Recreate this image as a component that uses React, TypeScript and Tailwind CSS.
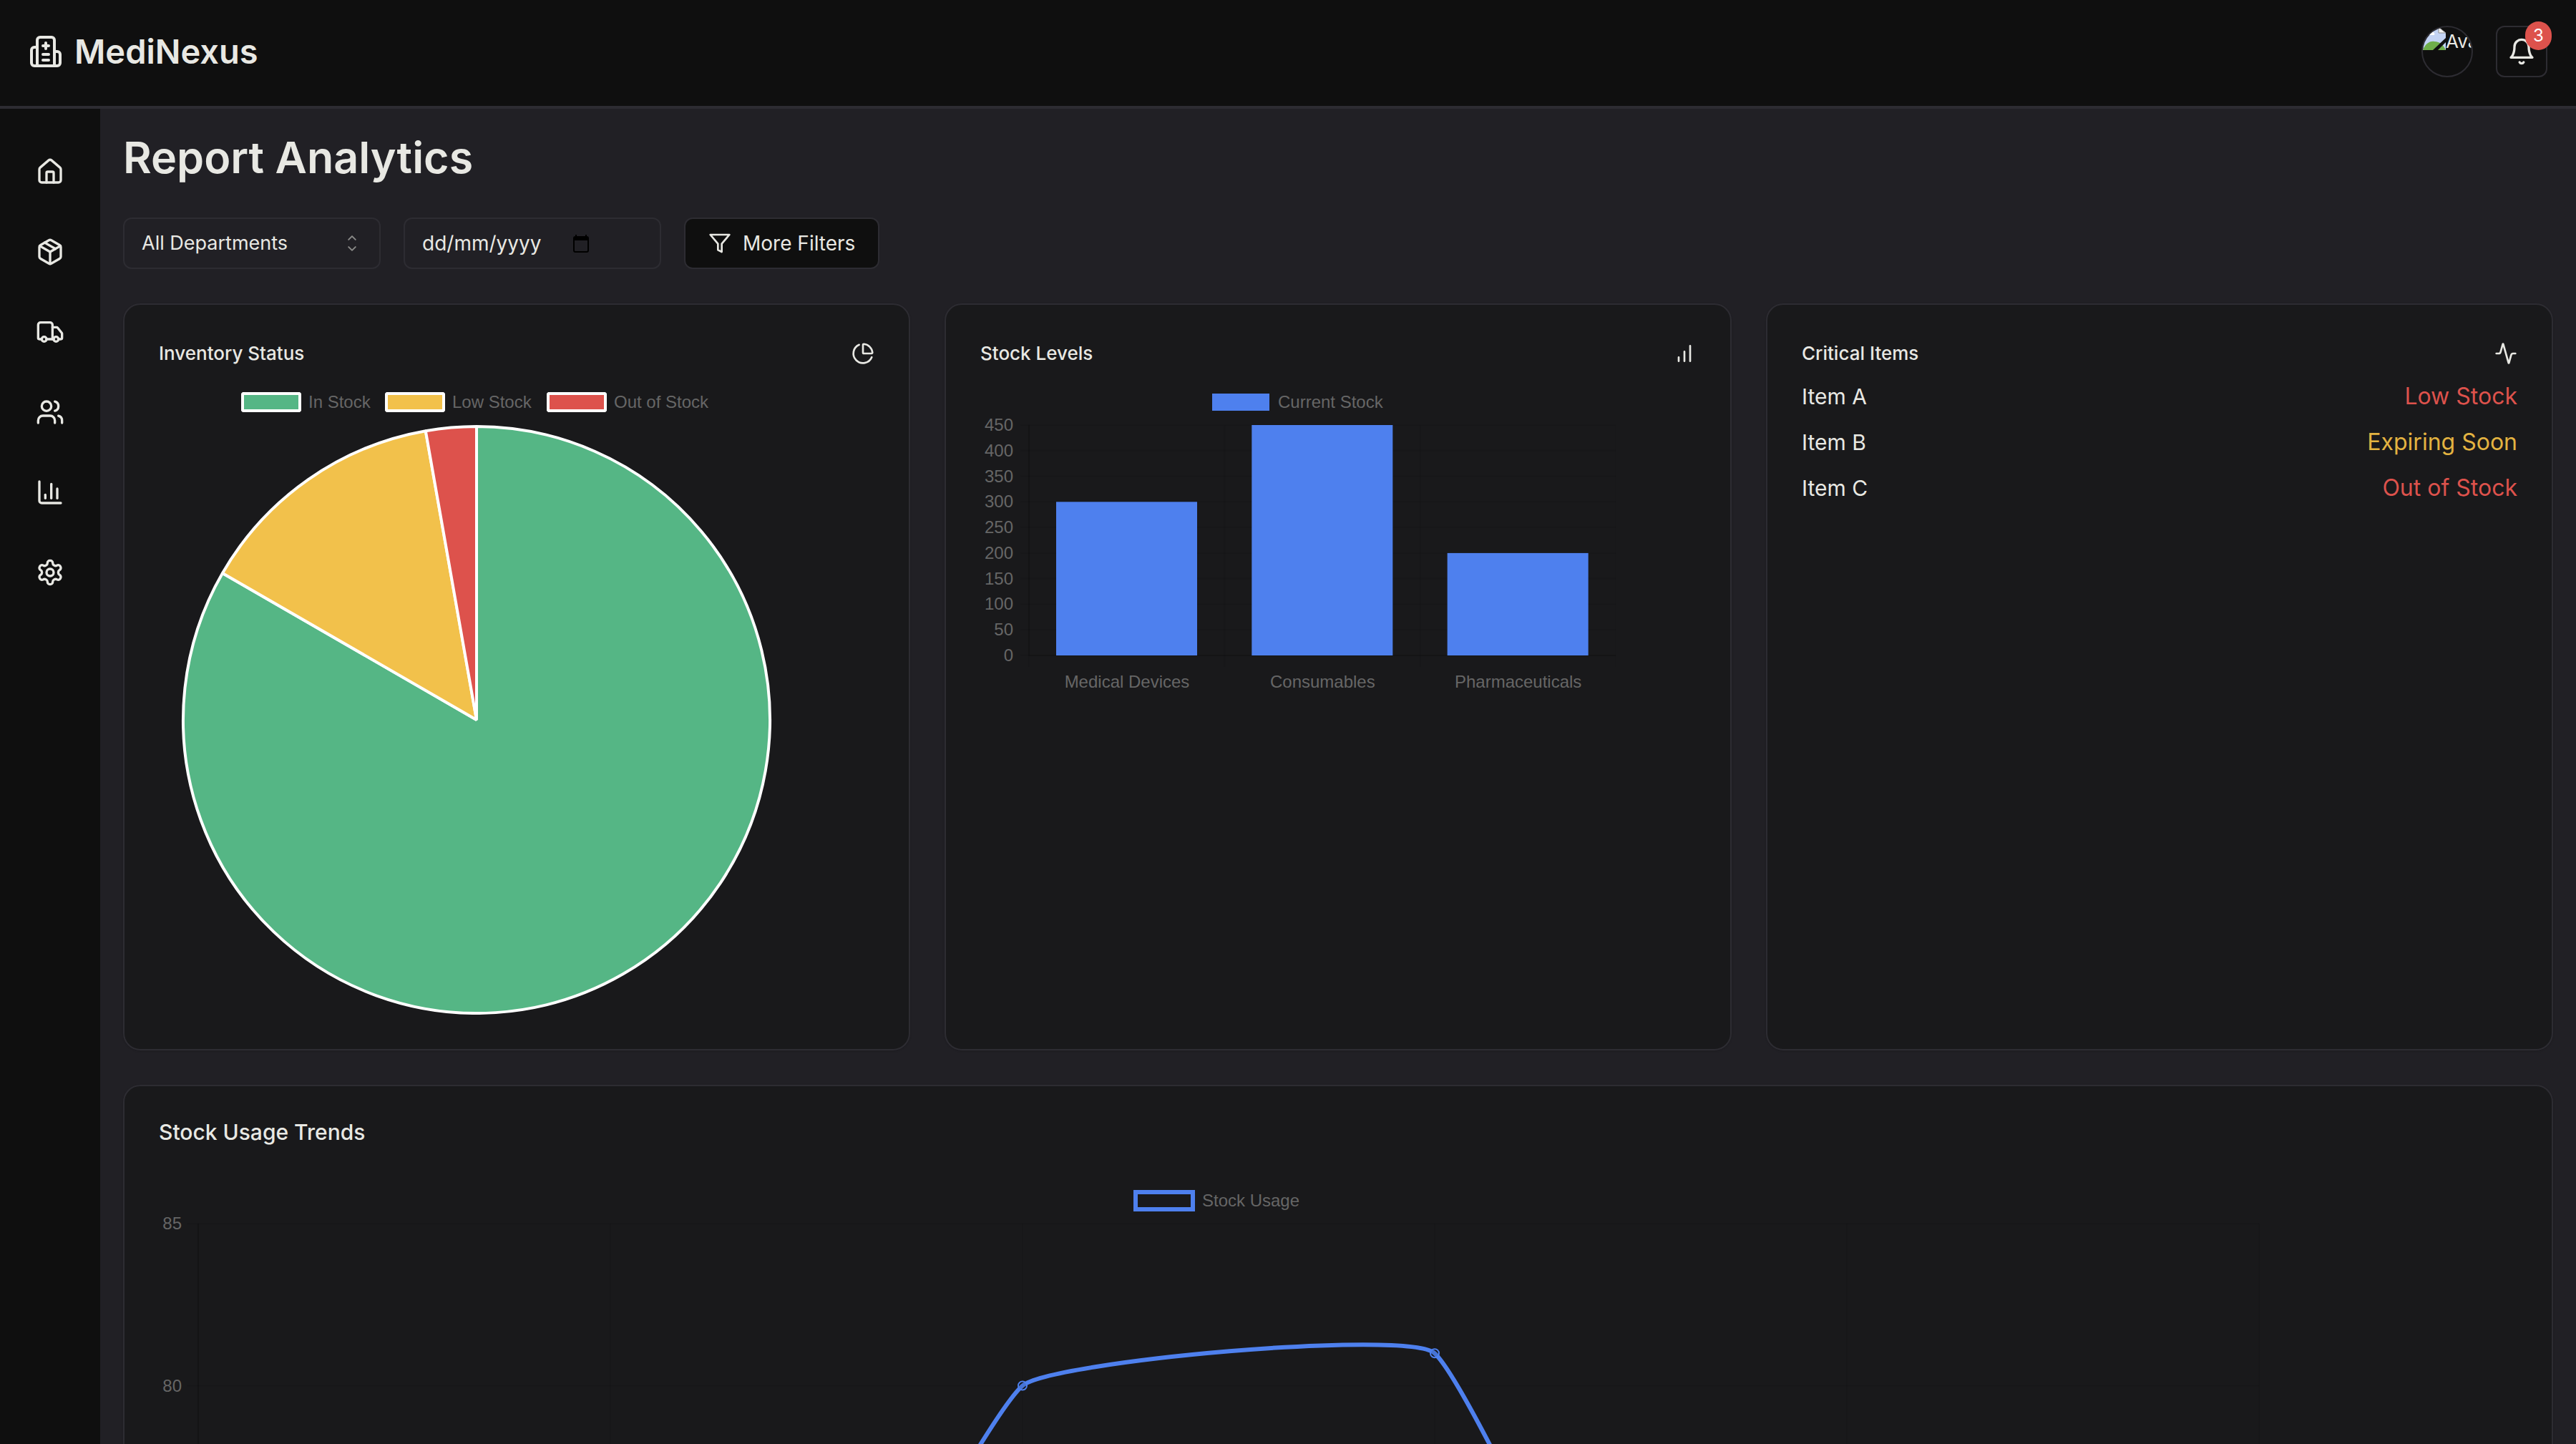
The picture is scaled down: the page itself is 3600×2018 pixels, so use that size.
import React from "react";
import { Activity, ChartColumn, ChartPie, House, Package, Truck, Users } from "lucide-react";

function StrokeIcon({ className, children }: { className: string; children: React.ReactNode }) {
  return (
    <svg viewBox="0 0 24 24" className={className} fill="none" stroke="currentColor" strokeWidth="2" strokeLinecap="round" strokeLinejoin="round" aria-hidden="true">
      {children}
    </svg>
  );
}

function HospitalIcon() {
  return (
    <StrokeIcon className="size-12">
      <path d="M12 6v4M14 14h-4M14 18h-4M14 8h-4" />
      <path d="M18 12h2a2 2 0 0 1 2 2v6a2 2 0 0 1-2 2H4a2 2 0 0 1-2-2v-9a2 2 0 0 1 2-2h2" />
      <path d="M18 22V4a2 2 0 0 0-2-2H8a2 2 0 0 0-2 2v18" />
    </StrokeIcon>
  );
}

function BellIcon() {
  return (
    <StrokeIcon className="size-10">
      <path d="M6 8a6 6 0 0 1 12 0c0 7 3 9 3 9H3s3-2 3-9" />
      <path d="M10.3 21a1.94 1.94 0 0 0 3.4 0" />
    </StrokeIcon>
  );
}

function FunnelIcon() {
  return (
    <StrokeIcon className="size-8">
      <polygon points="22 3 2 3 10 12.46 10 19 14 21 14 12.46 22 3" />
    </StrokeIcon>
  );
}

function BarsIcon() {
  return (
    <StrokeIcon className="size-8">
      <path d="M12 20V10M18 20V4M6 20v-4" />
    </StrokeIcon>
  );
}

function GearIcon({ className }: { className: string }) {
  return (
    <StrokeIcon className={className}>
      <path d="M12.22 2h-.44a2 2 0 0 0-2 2v.18a2 2 0 0 1-1 1.73l-.43.25a2 2 0 0 1-2 0l-.15-.08a2 2 0 0 0-2.73.73l-.22.38a2 2 0 0 0 .73 2.73l.15.1a2 2 0 0 1 1 1.72v.51a2 2 0 0 1-1 1.74l-.15.09a2 2 0 0 0-.73 2.73l.22.38a2 2 0 0 0 2.73.73l.15-.08a2 2 0 0 1 2 0l.43.25a2 2 0 0 1 1 1.73V20a2 2 0 0 0 2 2h.44a2 2 0 0 0 2-2v-.18a2 2 0 0 1 1-1.73l.43-.25a2 2 0 0 1 2 0l.15.08a2 2 0 0 0 2.73-.73l.22-.39a2 2 0 0 0-.73-2.73l-.15-.08a2 2 0 0 1-1-1.74v-.5a2 2 0 0 1 1-1.74l.15-.09a2 2 0 0 0 .73-2.73l-.22-.38a2 2 0 0 0-2.73-.73l-.15.08a2 2 0 0 1-2 0l-.43-.25a2 2 0 0 1-1-1.73V4a2 2 0 0 0-2-2z" />
      <circle cx="12" cy="12" r="3" />
    </StrokeIcon>
  );
}

function MissingImageIcon() {
  return (
    <svg viewBox="0 0 32 32" className="size-8 shrink-0" aria-hidden="true">
      <path d="M0 0h22l10 8v24H0z" fill="#c3d3f4" />
      <path d="M6 11a4 4 0 0 1 1-6 4 4 0 0 1 7 2 3 3 0 0 1 2 4z" fill="#fff" />
      <path d="M0 32c3-8 9-13 16-12 8 0 13 5 16 12z" fill="#6fae4a" />
      <path d="M22 0v8h10z" fill="#f4f4f4" stroke="#8d8d8d" />
      <path d="M14 32 32 15v6L21 32z" fill="#0f0f0f" />
    </svg>
  );
}

const navItems = [
  { label: "Home", Icon: House },
  { label: "Inventory", Icon: Package },
  { label: "Suppliers", Icon: Truck },
  { label: "Users", Icon: Users },
  { label: "Reports", Icon: ChartColumn },
  { label: "Settings", Icon: GearIcon },
];

const criticalItems = [
  { name: "Item A", status: "Low Stock", tone: "text-[#dd524c]" },
  { name: "Item B", status: "Expiring Soon", tone: "text-[#e3b341]" },
  { name: "Item C", status: "Out of Stock", tone: "text-[#dd524c]" },
];

function Card({ title, icon, children }: { title: string; icon: React.ReactNode; children: React.ReactNode }) {
  return (
    <section className="rounded-3xl border-2 border-[#2d2c32] bg-[#19191b] p-12 shadow-sm">
      <div className="mb-4 flex h-10 items-center justify-between">
        <h2 className="text-[26px] leading-10 font-medium">{title}</h2>
        {icon}
      </div>
      {children}
    </section>
  );
}

function slicePath(cx: number, cy: number, r: number, from: number, to: number) {
  const point = (deg: number) => {
    const a = ((deg - 90) * Math.PI) / 180;
    return `${cx + r * Math.cos(a)} ${cy + r * Math.sin(a)}`;
  };
  return `M${cx} ${cy}L${point(from)}A${r} ${r} 0 ${to - from > 180 ? 1 : 0} 1 ${point(to)}Z`;
}

function PieChart() {
  const slices = [
    { label: "In Stock", value: 300, color: "#55b685", x: 117 },
    { label: "Low Stock", value: 50, color: "#f2c14b", x: 318 },
    { label: "Out of Stock", value: 10, color: "#dd524c", x: 544 },
  ];
  let start = 0;
  return (
    <svg viewBox="0 0 888 888" className="block w-[888px] max-w-full font-['Liberation_Sans',sans-serif]" role="img" aria-label="Inventory status">
      {slices.map((s) => {
        const from = start;
        start += s.value;
        return (
          <g key={s.label} stroke="#fff" strokeWidth="4" strokeLinejoin="bevel">
            <rect x={s.x} y="20" width="80" height="24" fill={s.color} />
            <text x={s.x + 92} y="40" fontSize="24" fill="#666" stroke="none">{s.label}</text>
            <path d={slicePath(444, 476, 410, from, start)} fill={s.color} />
          </g>
        );
      })}
    </svg>
  );
}

function BarChart() {
  const bars = [
    { label: "Medical Devices", value: 300 },
    { label: "Consumables", value: 450 },
    { label: "Pharmaceuticals", value: 200 },
  ];
  const ticks = [450, 400, 350, 300, 250, 200, 150, 100, 50, 0];
  const y = (v: number) => 386 - (v / 450) * 322;
  const step = (888 - 68) / 3;
  return (
    <svg viewBox="0 0 888 444" className="block w-[888px] max-w-full font-['Liberation_Sans',sans-serif]" role="img" aria-label="Stock levels">
      <rect x="324" y="20" width="80" height="24" fill="#4e80ee" />
      <text x="416" y="40" fontSize="24" fill="#666">Current Stock</text>
      <g stroke="#000" strokeOpacity="0.07" strokeWidth="2">
        {ticks.map((t) => <path key={t} d={`M56 ${y(t)}H888`} />)}
        {[0, 1, 2, 3].map((i) => <path key={i} d={`M${68 + i * step} 64V402`} />)}
        <path d="M68 64V386H888" fill="none" strokeOpacity="0.12" />
      </g>
      {ticks.map((t) => (
        <text key={t} x="46" y={y(t) + 8} fontSize="24" fill="#666" textAnchor="end">{t}</text>
      ))}
      {bars.map((b, i) => (
        <g key={b.label}>
          <rect x={106 + i * step} y={y(b.value)} width="197" height={386 - y(b.value)} fill="#4e80ee" />
          <text x={205 + i * step} y="431" fontSize="24" fill="#666" textAnchor="middle">{b.label}</text>
        </g>
      ))}
    </svg>
  );
}

function smoothLine(points: number[][], tension: number) {
  const dist = (a: number[], b: number[]) => Math.hypot(a[0] - b[0], a[1] - b[1]);
  const controls = points.map((p, i) => {
    const prev = points[i - 1] ?? p;
    const next = points[i + 1] ?? p;
    const before = dist(prev, p);
    const after = dist(p, next);
    const k = tension / (before + after);
    const dx = next[0] - prev[0];
    const dy = next[1] - prev[1];
    return {
      inX: p[0] - k * before * dx,
      inY: p[1] - k * before * dy,
      outX: p[0] + k * after * dx,
      outY: p[1] + k * after * dy,
    };
  });
  return points
    .map((p, i) =>
      i === 0
        ? `M${p[0]} ${p[1]}`
        : `C${controls[i - 1].outX} ${controls[i - 1].outY} ${controls[i].inX} ${controls[i].inY} ${p[0]} ${p[1]}`,
    )
    .join("");
}

function LineChart() {
  const values = [65, 59, 80, 81, 56, 55];
  const months = ["Jan", "Feb", "Mar", "Apr", "May", "Jun"];
  const ticks = [85, 80, 75, 70, 65, 60, 55];
  const x = (i: number) => 55 + i * 576;
  const y = (v: number) => 64 + (85 - v) * 45.3;
  const points = values.map((v, i) => [x(i), y(v)]);
  return (
    <svg viewBox="0 0 2958 1479" className="block w-[2958px] max-w-full font-['Liberation_Sans',sans-serif]" role="img" aria-label="Stock usage by month">
      <rect x="1365" y="20" width="80" height="24" fill="none" stroke="#4e80ee" strokeWidth="6" />
      <text x="1458" y="40" fontSize="24" fill="#666">Stock Usage</text>
      <g stroke="#000" strokeOpacity="0.07" strokeWidth="2">
        {ticks.map((t) => <path key={t} d={`M39 ${y(t)}H${x(5)}`} />)}
        {months.map((m, i) => <path key={m} d={`M${x(i)} 64V${y(55) + 16}`} />)}
        <path d={`M${x(0)} 64V${y(55)}H${x(5)}`} fill="none" strokeOpacity="0.12" />
      </g>
      {ticks.map((t) => (
        <text key={t} x="32" y={y(t) + 8} fontSize="24" fill="#666" textAnchor="end">{t}</text>
      ))}
      {months.map((m, i) => (
        <text key={m} x={x(i)} y={y(55) + 46} fontSize="24" fill="#666" textAnchor="middle">{m}</text>
      ))}
      <path d={smoothLine(points, 0.1)} fill="none" stroke="#4e80ee" strokeWidth="6" />
      {points.map((p, i) => (
        <circle key={months[i]} cx={p[0]} cy={p[1]} r="6" fill="#000" fillOpacity="0.1" stroke="#4e80ee" strokeWidth="2" />
      ))}
    </svg>
  );
}

export default function App() {
  return (
    <div className="flex h-screen flex-col overflow-hidden bg-[#212025] font-['Inter',sans-serif] text-[#e8e8e3]">
      <header className="flex h-[152px] shrink-0 items-start justify-between border-b-4 border-[#2d2c32] bg-[#0f0f0f] px-10 pt-9">
        <a href="#" className="flex h-[72px] items-center gap-4">
          <HospitalIcon />
          <span className="text-[47px] font-semibold">MediNexus</span>
        </a>
        <div className="flex gap-8">
          <div role="img" aria-label="Avatar" className="flex size-[72px] items-start overflow-hidden rounded-full border-2 border-[#2d2c32]">
            <MissingImageIcon />
            <span className="text-[26px] leading-10">Avatar</span>
          </div>
          <button type="button" aria-label="Notifications, 3 unread" className="relative flex size-[72px] items-center justify-center rounded-xl border-2 border-[#2d2c32]">
            <BellIcon />
            <span className="absolute -top-2 -right-2 flex h-10 w-[37px] items-center justify-center rounded-full bg-[#dd524c] text-2xl text-white">3</span>
          </button>
        </div>
      </header>
      <div className="flex min-h-0 flex-1">
        <nav aria-label="Main" className="flex w-[140px] shrink-0 flex-col items-center gap-8 bg-[#0f0f0f] pt-12">
          {navItems.map(({ label, Icon }) => (
            <a key={label} href="#" aria-label={label} className="flex size-20 items-center justify-center">
              <Icon className="size-10" />
            </a>
          ))}
        </nav>
        <main className="min-w-0 flex-1 overflow-y-auto px-8 pt-8 [scrollbar-width:none]">
          <h1 className="text-[61px] leading-[72px] font-semibold">Report Analytics</h1>
          <form className="mt-12 flex gap-8 text-[28px]">
            <div className="relative h-[72px] w-[360px]">
              <select aria-label="Department" className="h-full w-full appearance-none rounded-xl border-2 border-[#2d2c32] px-6 text-[27px]">
                <option>All Departments</option>
              </select>
              <svg viewBox="0 0 15 15" className="pointer-events-none absolute top-5 right-6 size-8" fill="#8a8a88" aria-hidden="true">
                <path fillRule="evenodd" clipRule="evenodd" d="M4.93 5.43a.45.45 0 0 0 .64 0L7.5 3.5l1.93 1.93a.45.45 0 0 0 .64-.64L7.82 2.54a.45.45 0 0 0-.64 0L4.93 4.79a.45.45 0 0 0 0 .64zm5.14 4.14a.45.45 0 0 0-.64 0L7.5 11.5 5.57 9.57a.45.45 0 0 0-.64.64l2.25 2.25c.18.18.46.18.64 0l2.25-2.25a.45.45 0 0 0 0-.64z" />
              </svg>
            </div>
            <div className="relative h-[72px] w-[360px]">
              <input type="text" aria-label="Date" placeholder="dd/mm/yyyy" className="h-full w-full rounded-xl border-2 border-[#2d2c32] px-6 placeholder:text-[#e8e8e3]" />
              <svg viewBox="0 0 24 26" className="absolute top-6 left-[236px] h-[26px] w-6" aria-hidden="true">
                <path d="M5 0v4M19 0v4" stroke="#000" strokeWidth="2" />
                <rect x="2" y="3" width="20" height="21" rx="2" fill="none" stroke="#000" strokeWidth="2" />
                <path d="M2 3h20v5H2z" />
              </svg>
            </div>
            <button type="button" className="flex h-[72px] items-center gap-4 rounded-xl border-2 border-[#2d2c32] bg-[#0f0f0f] px-8">
              <FunnelIcon />
              More Filters
            </button>
          </form>
          <div className="mt-12 grid grid-cols-3 gap-12">
            <Card title="Inventory Status" icon={<ChartPie className="size-8" />}>
              <PieChart />
            </Card>
            <Card title="Stock Levels" icon={<BarsIcon />}>
              <BarChart />
            </Card>
            <Card title="Critical Items" icon={<Activity className="size-8" />}>
              <ul className="flex flex-col gap-4 leading-[48px]">
                {criticalItems.map((item) => (
                  <li key={item.name} className="flex justify-between">
                    <span className="text-[30px]">{item.name}</span>
                    <span className={`text-[32px] ${item.tone}`}>{item.status}</span>
                  </li>
                ))}
              </ul>
            </Card>
          </div>
          <section className="mt-12 rounded-3xl border-2 border-[#2d2c32] bg-[#19191b] p-12 shadow-sm">
            <h2 className="mb-12 text-[30px] leading-8 font-medium">Stock Usage Trends</h2>
            <LineChart />
          </section>
        </main>
      </div>
    </div>
  );
}
